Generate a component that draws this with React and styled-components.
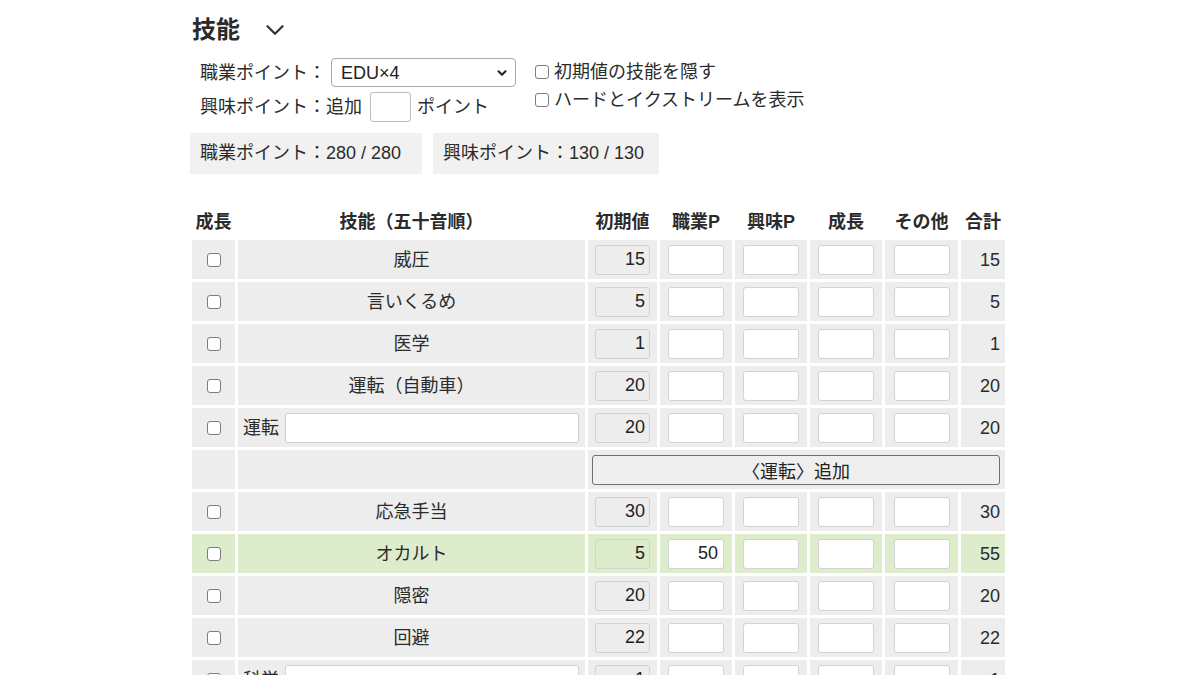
import React from 'react';
import styled, { createGlobalStyle, css } from 'styled-components';
import { ChevronDown } from 'lucide-react';

const GlobalStyle = createGlobalStyle`
    html {
        overflow: hidden;
    }
    body {
        margin: 0;
        background: #ffffff;
        color: #2b2b2b;
        font-family: "Liberation Sans", "Noto Sans CJK JP", sans-serif;
        font-size: 18px;
    }
    * {
        box-sizing: border-box;
    }
`;

const Page = styled.div`
    width: 820px;
    margin: 0 auto;
    padding-top: 12px;
`;

const TitleRow = styled.div`
    display: flex;
    align-items: center;
    height: 36px;
    padding-left: 2px;
`;

const Title = styled.h2`
    margin: 0;
    font-size: 24px;
    font-weight: bold;
    line-height: 36px;
    color: #2b2b2b;
`;

const Toggle = styled.span`
    display: flex;
    margin-left: 20px;
    color: #333333;
`;

const Controls = styled.div`
    display: flex;
    gap: 18px;
    margin-top: 10px;
`;

const PointForm = styled.div`
    display: flex;
    flex-direction: column;
    gap: 5px;
    padding-left: 10px;
`;

const FormRow = styled.div`
    display: flex;
    align-items: center;
    height: ${({ $h }) => $h || 29}px;
    line-height: 1;
    white-space: nowrap;
`;

const SelectWrap = styled.div`
    position: relative;
    width: 185px;
    height: 29px;
    margin-left: 5px;
`;

const Select = styled.select`
    appearance: none;
    width: 100%;
    height: 100%;
    padding: 0 24px 0 9px;
    border: 1px solid #a9a9a9;
    border-radius: 4px;
    background: #ffffff;
    color: #222222;
    font-family: inherit;
    font-size: 18px;
`;

const SelectIcon = styled.span`
    position: absolute;
    right: 7px;
    top: 8px;
    display: flex;
    pointer-events: none;
    color: #222222;
`;

const SmallInput = styled.input`
    width: 41px;
    height: 30px;
    margin: 0 6px 0 8px;
    border: 1px solid #bdbdbd;
    border-radius: 3px;
    background: #ffffff;
`;

const Options = styled.div`
    display: flex;
    flex-direction: column;
    line-height: 28px;
`;

const CheckLabel = styled.label`
    display: flex;
    align-items: center;
    white-space: nowrap;
`;

const Check = styled.input.attrs({ type: 'checkbox' })`
    appearance: none;
    display: block;
    flex: none;
    width: 14px;
    height: 14px;
    margin: ${({ $inline }) => ($inline ? '0 5px 0 1px' : '0 auto')};
    border: 1px solid #7d7d7d;
    border-radius: 3px;
    background: #ffffff;
`;

const Summary = styled.div`
    display: flex;
    gap: 11px;
    margin-top: 11px;
`;

const SummaryBox = styled.div`
    width: ${({ $w }) => $w}px;
    height: 41px;
    line-height: 41px;
    padding: 0 10px;
    background: #f1f1f1;
    white-space: nowrap;
`;

const SkillTable = styled.table`
    width: 819px;
    margin: 29px 0 0 -1px;
    table-layout: fixed;
    border-collapse: separate;
    border-spacing: 3px;
`;

const Th = styled.th`
    height: 31px;
    padding: 0;
    font-size: 18px;
    font-weight: bold;
    line-height: 1;
    text-align: center;
    white-space: nowrap;
`;

const Td = styled.td`
    height: 39px;
    padding: 0 ${({ $pad }) => $pad || 0}px 0 0;
    background: ${({ $green }) => ($green ? '#ddeccb' : '#ededed')};
    text-align: ${({ $align }) => $align || 'center'};
    line-height: 1;
    white-space: nowrap;
`;

const NameCell = styled.div`
    display: flex;
    align-items: center;
    gap: 6px;
    padding: 0 6px 0 5px;
`;

const NameInput = styled.input`
    flex: 1;
    height: 30px;
    border: 1px solid #cfcfcf;
    border-radius: 3px;
    background: #ffffff;
`;

const NumInput = styled.input`
    display: block;
    width: 56px;
    height: 30px;
    margin: 0 auto;
    padding: 0 5px 0 0;
    border: 1px solid #d3d3d3;
    border-radius: 3px;
    font-family: inherit;
    font-size: 18px;
    color: #222222;
    text-align: right;
    ${({ readOnly }) =>
        readOnly
            ? css`
                  width: 55px;
                  background: transparent;
                  padding-right: 4px;
              `
            : css`
                  background: #ffffff;
              `}
`;

const AddButton = styled.button`
    display: block;
    width: calc(100% - 9px);
    height: 30px;
    margin-left: 4px;
    border: 1px solid #707070;
    border-radius: 3px;
    background: #efefef;
    color: #222222;
    font-family: inherit;
    font-size: 18px;
`;

const skills = [
    { name: '威圧', base: 15 },
    { name: '言いくるめ', base: 5 },
    { name: '医学', base: 1 },
    { name: '運転（自動車）', base: 20 },
    { name: '運転', base: 20, custom: true },
    { add: '運転' },
    { name: '応急手当', base: 30 },
    { name: 'オカルト', base: 5, job: 50, green: true },
    { name: '隠密', base: 20 },
    { name: '回避', base: 22 },
    { name: '科学', base: 1, custom: true },
    { add: '科学' },
];

const headers = ['成長', '技能（五十音順）', '初期値', '職業P', '興味P', '成長', 'その他', '合計'];
const widths = [43, 347, 69, 72, 72, 72, 73, 44];

function SkillRow({ skill }) {
    if (skill.add) {
        return (
            <tr>
                <Td />
                <Td />
                <Td colSpan={6}>
                    <AddButton>〈{skill.add}〉追加</AddButton>
                </Td>
            </tr>
        );
    }
    const g = skill.green;
    return (
        <tr>
            <Td $green={g}>
                <Check />
            </Td>
            <Td $green={g}>
                {skill.custom ? (
                    <NameCell>
                        {skill.name}
                        <NameInput />
                    </NameCell>
                ) : (
                    skill.name
                )}
            </Td>
            <Td $green={g}>
                <NumInput readOnly value={skill.base} />
            </Td>
            <Td $green={g}>
                <NumInput defaultValue={skill.job || ''} />
            </Td>
            <Td $green={g}>
                <NumInput />
            </Td>
            <Td $green={g}>
                <NumInput />
            </Td>
            <Td $green={g}>
                <NumInput />
            </Td>
            <Td $green={g} $align="right" $pad={5}>
                {skill.base + (skill.job || 0)}
            </Td>
        </tr>
    );
}

export default function App() {
    return (
        <Page>
            <GlobalStyle />
            <TitleRow>
                <Title>技能</Title>
                <Toggle>
                    <ChevronDown size={30} strokeWidth={1.8} />
                </Toggle>
            </TitleRow>
            <Controls>
                <PointForm>
                    <FormRow>
                        職業ポイント：
                        <SelectWrap>
                            <Select defaultValue="edu4">
                                <option value="edu4">EDU×4</option>
                            </Select>
                            <SelectIcon>
                                <ChevronDown size={14} strokeWidth={3.5} />
                            </SelectIcon>
                        </SelectWrap>
                    </FormRow>
                    <FormRow $h={30}>
                        興味ポイント：追加
                        <SmallInput />
                        ポイント
                    </FormRow>
                </PointForm>
                <Options>
                    <CheckLabel>
                        <Check $inline />
                        初期値の技能を隠す
                    </CheckLabel>
                    <CheckLabel>
                        <Check $inline />
                        ハードとイクストリームを表示
                    </CheckLabel>
                </Options>
            </Controls>
            <Summary>
                <SummaryBox $w={232}>職業ポイント：280 / 280</SummaryBox>
                <SummaryBox $w={226}>興味ポイント：130 / 130</SummaryBox>
            </Summary>
            <SkillTable>
                <colgroup>
                    {widths.map((w, i) => (
                        <col key={i} style={{ width: w }} />
                    ))}
                </colgroup>
                <thead>
                    <tr>
                        {headers.map((h, i) => (
                            <Th key={i}>{h}</Th>
                        ))}
                    </tr>
                </thead>
                <tbody>
                    {skills.map((s, i) => (
                        <SkillRow key={i} skill={s} />
                    ))}
                </tbody>
            </SkillTable>
        </Page>
    );
}
